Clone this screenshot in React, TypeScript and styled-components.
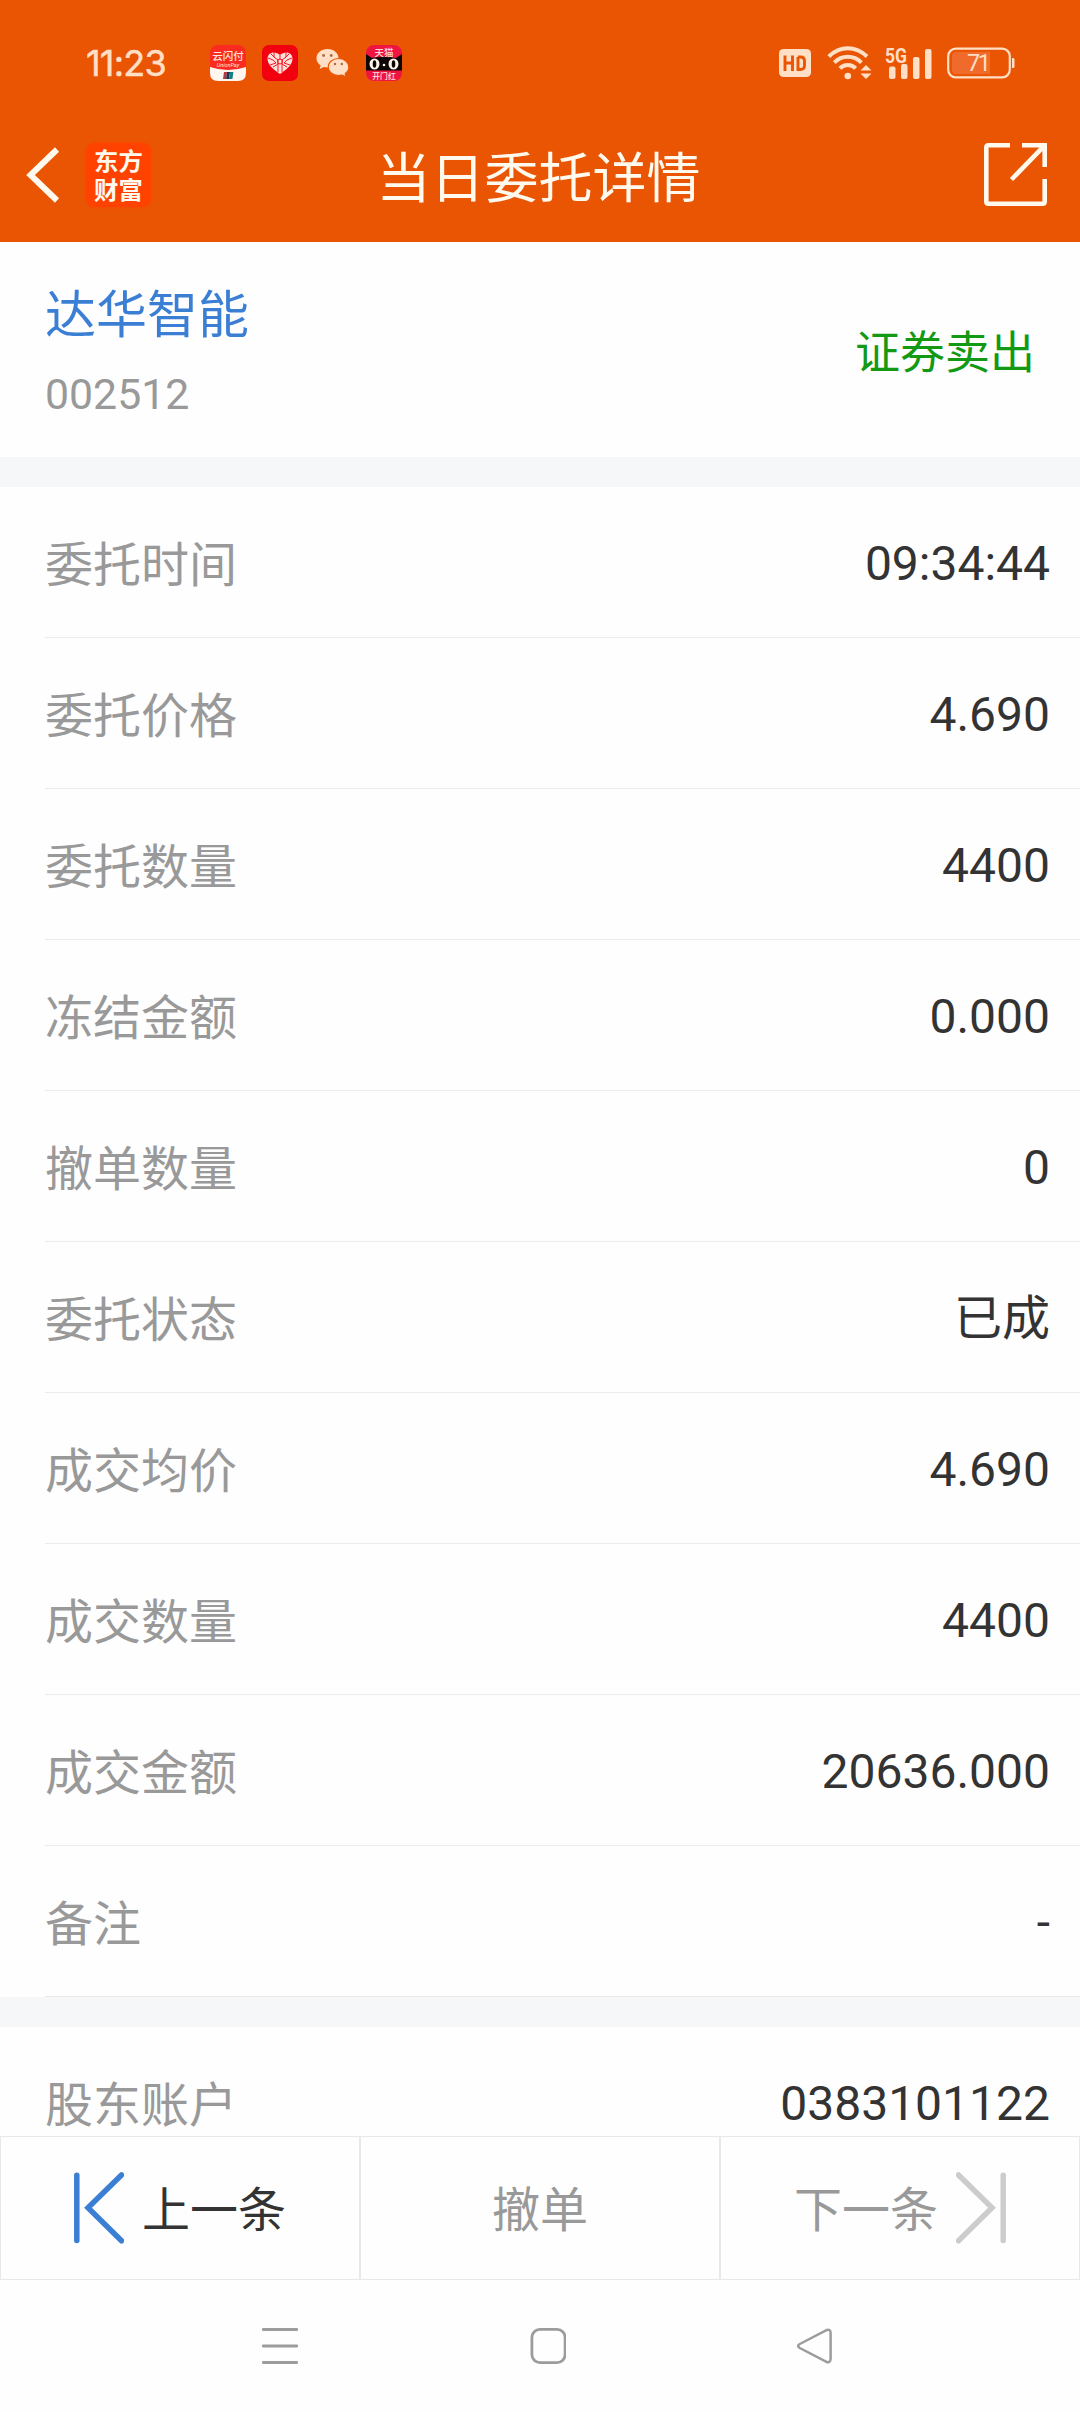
import React from 'react';
import styled, { createGlobalStyle } from 'styled-components';

const CJK = "'Noto Sans CJK SC', 'Noto Sans', sans-serif";
const LATIN = "Roboto, 'Noto Sans CJK SC', sans-serif";
const ORANGE = '#ea5504';
const TINT = '#ffdfc6';
const CREAM = '#fff9ee';

const GlobalStyle = createGlobalStyle`
  * { box-sizing: border-box; }
  html, body { margin: 0; padding: 0; background: #fefefe; }
  body { font-family: ${CJK}; }
`;

const Screen = styled.div`
  width: 1080px;
  height: 2412px;
  display: flex;
  flex-direction: column;
  background: #fefefe;
  overflow: hidden;
`;

const Header = styled.header`
  flex: none;
  height: 242px;
  background: ${ORANGE};
`;

const StatusBar = styled.div`
  height: 122px;
  padding: 4px 65px 0 86px;
  display: flex;
  align-items: center;
  justify-content: space-between;
`;

const StatusGroup = styled.div<{ $gap: number }>`
  display: flex;
  align-items: center;
  gap: ${(p) => p.$gap}px;
  svg { display: block; overflow: visible; }
`;

const Clock = styled.span`
  width: 108px;
  font: 400 36px/40px Inter, sans-serif;
  letter-spacing: -0.8px;
  -webkit-text-stroke: 0.5px ${TINT};
  color: ${TINT};
  white-space: nowrap;
`;

const TitleBar = styled.div`
  height: 105px;
  padding: 0 33px 0 26px;
  display: grid;
  grid-template-columns: 1fr auto 1fr;
  align-items: center;
`;

const TitleSide = styled.div<{ $end?: boolean }>`
  display: flex;
  align-items: center;
  gap: 25px;
  justify-content: ${(p) => (p.$end ? 'flex-end' : 'flex-start')};
  svg { display: block; }
`;

const BrandLogo = styled.div`
  width: 65px;
  height: 64px;
  padding: 0 8px 2px;
  border-radius: 9px;
  background: #ff4200;
  box-shadow: 0 0 3px #ff4200;
  color: ${CREAM};
  font: 700 24.4px/29px ${CJK};
  word-break: break-all;
  display: flex;
  align-items: center;
`;

const Title = styled.h1`
  margin: 0;
  padding-left: 4px;
  font: 400 54px/80px ${CJK};
  color: ${CREAM};
`;

const Summary = styled.section`
  flex: none;
  height: 215px;
  padding: 0 45px;
  display: flex;
  justify-content: space-between;
  align-items: center;
`;

const StockName = styled.div`
  font: 400 51px/72px ${CJK};
  color: #3b7fd4;
`;

const StockCode = styled.div`
  margin-top: 17px;
  font: 400 42.8px/60px ${LATIN};
  color: #999;
`;

const Side = styled.div`
  font: 400 45px/64px ${CJK};
  color: #149914;
`;

const Band = styled.div`
  flex: none;
  height: 30px;
  background: #f6f7f9;
`;

const List = styled.section<{ $fill?: boolean }>`
  flex: ${(p) => (p.$fill ? '1 1 0' : 'none')};
  min-height: 0;
  overflow: hidden;
  padding-left: 45px;
`;

const Row = styled.div`
  height: 151px;
  padding-right: 30px;
  display: flex;
  align-items: center;
  justify-content: space-between;
  border-bottom: 1px solid #ebebeb;
`;

const Label = styled.span`
  padding-bottom: 3px;
  font: 400 48px/70px ${CJK};
  color: #999;
`;

const Value = styled.span`
  padding-top: 3px;
  font: 400 48px/70px ${LATIN};
  color: #333;
`;

const Actions = styled.div`
  flex: none;
  height: 144px;
  display: grid;
  grid-template-columns: repeat(3, 1fr);
`;

const ActionButton = styled.button<{ $color: string }>`
  border: 1px solid #e9e9e9;
  background: #fefefe;
  padding: 0;
  display: flex;
  align-items: center;
  justify-content: center;
  gap: 18px;
  font: 400 48px/70px ${CJK};
  color: ${(p) => p.$color};
  svg { display: block; }
`;

const ActionText = styled.span`
  padding-bottom: 4px;
`;

const SystemNav = styled.nav`
  flex: none;
  height: 132px;
  padding-left: 262px;
  display: flex;
  align-items: center;
  gap: 231.5px;
  svg { display: block; }
`;

const UnionPayIcon = () => (
  <svg width="36" height="36" viewBox="0 0 36 36">
    <rect width="36" height="36" rx="8" fill="#fb2b22" />
    <path d="M0 22Q18 28 36 22V28Q36 36 28 36H8Q0 36 0 28Z" fill="#fff6f0" />
    <text x="18" y="14.5" fontSize="10.5" fontWeight="500" fill="#ffe9dc" textAnchor="middle" fontFamily={CJK}>云闪付</text>
    <text x="18" y="21.5" fontSize="5.5" fontStyle="italic" fill="#ffe9dc" textAnchor="middle" fontFamily={LATIN}>UnionPay</text>
    <path d="M14 27h3l-1 7h-3z" fill="#c0343c" />
    <path d="M17 27h3l-1 7h-3z" fill="#1d3550" />
    <path d="M20 27h3.400l-1 7h-3.400z" fill="#128080" />
  </svg>
);

const HeartIcon = () => (
  <svg width="36" height="36" viewBox="0 0 36 36">
    <rect width="36" height="36" rx="7" fill="#f30010" />
    <path d="M18 29C9 23 5.500 18.500 5.500 13.500C5.500 7 13.500 5.500 18 10C22.500 5.500 30.500 7 30.500 13.500C30.500 18.500 27 23 18 29Z" fill="#ffe1da" />
    <g stroke="#f30010" strokeWidth="0.900" fill="none">
      <path d="M12 7v5l4 3v12M24 7v5l-4 3v12M6 13l5 2 3 3-6 2M30 13l-5 2-3 3 6 2M9 9l3 3M27 9l-3 3M11 22l5-3M25 22l-5-3M18 10v4" />
      <circle cx="18" cy="16.500" r="2.500" />
    </g>
  </svg>
);

const WeChatIcon = () => (
  <svg width="36" height="30" viewBox="-2 0 36 30">
    <path d="M11.500 1C5.200 1 .5 5 .5 10.200c0 3 1.600 5.500 4.200 7.200L3.600 21l4.200-2.100c1.200.3 2.400.5 3.700.5 6.300 0 11-4 11-9.200S17.800 1 11.500 1Z" fill={TINT} />
    <path d="M22.500 10.500c-5.800 0-10.300 3.800-10.300 8.500s4.500 8.500 10.300 8.500c1.300 0 2.500-.2 3.600-.5l4.100 2-1.100-3.400c2.300-1.600 3.700-3.900 3.700-6.600 0-4.700-4.500-8.500-10.300-8.500Z" fill={TINT} stroke={ORANGE} strokeWidth="1.100" />
    <g fill="#a96b42">
      <circle cx="7.600" cy="7.500" r="1.400" /><circle cx="15.200" cy="7.500" r="1.400" />
      <circle cx="19" cy="16" r="1.200" /><circle cx="25.800" cy="16" r="1.200" />
    </g>
  </svg>
);

const TmallIcon = () => (
  <svg width="36" height="36" viewBox="0 0 36 36">
    <rect width="36" height="36" rx="8" fill="#ef1540" />
    <path d="M0 9l6 4q12-3 24 0l6-4v16.500H0Z" fill="#0c0606" />
    <text x="18" y="11" fontSize="9.500" fontWeight="500" fill="#ffd9d9" textAnchor="middle" fontFamily={CJK}>天猫</text>
    <ellipse cx="8.500" cy="19" rx="5" ry="5.500" fill="#fff4ea" />
    <ellipse cx="27.500" cy="19" rx="5" ry="5.500" fill="#fff4ea" />
    <ellipse cx="8.500" cy="19" rx="1.800" ry="3.800" fill="#0c0606" />
    <ellipse cx="27.500" cy="19" rx="1.800" ry="3.800" fill="#0c0606" />
    <circle cx="18" cy="20" r="1.300" fill="#fff4ea" />
    <text x="18" y="33.500" fontSize="7.800" fontWeight="500" fill="#ffe3df" textAnchor="middle" fontFamily={CJK}>开门红</text>
  </svg>
);

const HdIcon = () => (
  <svg width="34" height="28" viewBox="0 0 34 28">
    <rect width="32" height="28" rx="4.500" fill={TINT} />
    <path d="M6 6.500V22M13.500 6.500V22M6 14h7.500M19 8v12.500h2.500q4 0 4-4v-4.500q0-4-4-4H19" fill="none" stroke={ORANGE} strokeWidth="2.900" />
  </svg>
);

const WifiIcon = () => (
  <svg width="44" height="36" viewBox="0 0 44 36">
    <g fill="none" stroke={TINT} strokeWidth="4">
      <path d="M1.800 11.500Q10 3.200 20.800 3.200T40 11.500" />
      <path d="M7.300 17.600Q13 11.800 20.800 11.800T34.400 17.600" />
      <path d="M13 23.400Q16 20 20.800 20T28.600 23.400" />
    </g>
    <circle cx="20.800" cy="31" r="3.300" fill={TINT} />
    <path d="M33.500 25.500l5.500-5.500 5.500 5.500zM33.500 28.500h11L39 34z" fill={TINT} />
  </svg>
);

const SignalIcon = () => (
  <svg width="48" height="38" viewBox="0 -4 48 38">
    <g fill={TINT}>
      <text x="0" y="14.500" fontSize="20.500" fontWeight="700" textLength="22" lengthAdjust="spacingAndGlyphs" fontFamily="Roboto, sans-serif">5G</text>
      <rect x="4" y="18.500" width="6.500" height="12.500" rx="2" />
      <rect x="16" y="16" width="6.500" height="15" rx="2" />
      <rect x="28" y="9" width="6.500" height="22" rx="2" />
      <rect x="40" y="1" width="6.500" height="30" rx="2" />
    </g>
  </svg>
);

const BatteryIcon = () => (
  <svg width="68" height="32" viewBox="0 0 68 32">
    <rect x="1.200" y="1.700" width="61.600" height="28.600" rx="7.500" fill="none" stroke={TINT} strokeWidth="2.200" />
    <path d="M9 5h34v22H9q-4 0-4-4V9q0-4 4-4Z" fill="#f06a2c" />
    <path d="M65 11h1q1.500 0 1.500 1.500v7q0 1.500-1.500 1.500h-1z" fill={TINT} />
    <text x="32" y="24.300" fontSize="23.500" fill={TINT} textAnchor="middle" fontFamily="Roboto, sans-serif" textLength="24">71</text>
  </svg>
);

const BackIcon = () => (
  <svg width="35" height="56" viewBox="0 0 35 56">
    <path d="M31 2.500L4.500 28 31 53.500" fill="none" stroke={CREAM} strokeWidth="6" />
  </svg>
);

const ShareIcon = () => (
  <svg width="63" height="63" viewBox="0 0 63 63">
    <g fill="none" stroke={CREAM} strokeWidth="4.600">
      <path d="M26 2.300H4.500q-2.200 0-2.200 2.200v54q0 2.200 2.200 2.200h54q2.200 0 2.200-2.200V36" />
      <path d="M38 2.300h22.700V24M60.200 2.800L27.500 36.500" />
    </g>
  </svg>
);

const StepIcon = ({ color, flip }: { color: string; flip?: boolean }) => (
  <svg width="50" height="72" viewBox="0 0 50 72">
    <g transform={flip ? 'translate(50 0) scale(-1 1)' : undefined} fill="none" stroke={color} strokeWidth="5.500" strokeLinecap="round">
      <path d="M2.800 3.200V68.500" />
      <path d="M47.500 3L14 35.800l33.500 33" />
    </g>
  </svg>
);

const MenuIcon = () => (
  <svg width="36" height="36" viewBox="0 0 36 36">
    <path d="M1.200 1.500h33.600M1.200 18h33.600M1.200 34.500h33.600" stroke="#9c9c9c" strokeWidth="2.900" strokeLinecap="round" />
  </svg>
);

const HomeIcon = () => (
  <svg width="36" height="36" viewBox="0 0 36 36">
    <rect x="1.900" y="1.400" width="33.200" height="33.200" rx="8" fill="none" stroke="#9c9c9c" strokeWidth="2.800" />
  </svg>
);

const ReturnIcon = () => (
  <svg width="36" height="36" viewBox="0 0 36 36">
    <path d="M2.800 16L29 2.300Q33.600 .7 33.600 5V31Q33.600 35.300 29 33.700L2.800 20Q-.6 18 2.800 16Z" fill="none" stroke="#9c9c9c" strokeWidth="2.500" />
  </svg>
);

const orderRows: [string, string][] = [
  ['委托时间', '09:34:44'],
  ['委托价格', '4.690'],
  ['委托数量', '4400'],
  ['冻结金额', '0.000'],
  ['撤单数量', '0'],
  ['委托状态', '已成'],
  ['成交均价', '4.690'],
  ['成交数量', '4400'],
  ['成交金额', '20636.000'],
  ['备注', '-'],
];

const accountRows: [string, string][] = [['股东账户', '0383101122']];

const Rows = ({ items }: { items: [string, string][] }) => (
  <>
    {items.map(([label, value]) => (
      <Row key={label}>
        <Label>{label}</Label>
        <Value>{value}</Value>
      </Row>
    ))}
  </>
);

export default function App() {
  return (
    <>
      <GlobalStyle />
      <Screen>
        <Header>
          <StatusBar>
            <StatusGroup $gap={16}>
              <Clock>11:23</Clock>
              <UnionPayIcon />
              <HeartIcon />
              <WeChatIcon />
              <TmallIcon />
            </StatusGroup>
            <StatusGroup $gap={14}>
              <HdIcon />
              <WifiIcon />
              <SignalIcon />
              <BatteryIcon />
            </StatusGroup>
          </StatusBar>
          <TitleBar>
            <TitleSide>
              <BackIcon />
              <BrandLogo>东方财富</BrandLogo>
            </TitleSide>
            <Title>当日委托详情</Title>
            <TitleSide $end>
              <ShareIcon />
            </TitleSide>
          </TitleBar>
        </Header>
        <Summary>
          <div>
            <StockName>达华智能</StockName>
            <StockCode>002512</StockCode>
          </div>
          <Side>证券卖出</Side>
        </Summary>
        <Band />
        <List>
          <Rows items={orderRows} />
        </List>
        <Band />
        <List $fill>
          <Rows items={accountRows} />
        </List>
        <Actions>
          <ActionButton $color="#333">
            <StepIcon color="#3b7fd4" />
            <ActionText>上一条</ActionText>
          </ActionButton>
          <ActionButton $color="#999">
            <ActionText>撤单</ActionText>
          </ActionButton>
          <ActionButton $color="#999">
            <ActionText>下一条</ActionText>
            <StepIcon color="#ccc" flip />
          </ActionButton>
        </Actions>
        <SystemNav>
          <MenuIcon />
          <HomeIcon />
          <ReturnIcon />
        </SystemNav>
      </Screen>
    </>
  );
}
